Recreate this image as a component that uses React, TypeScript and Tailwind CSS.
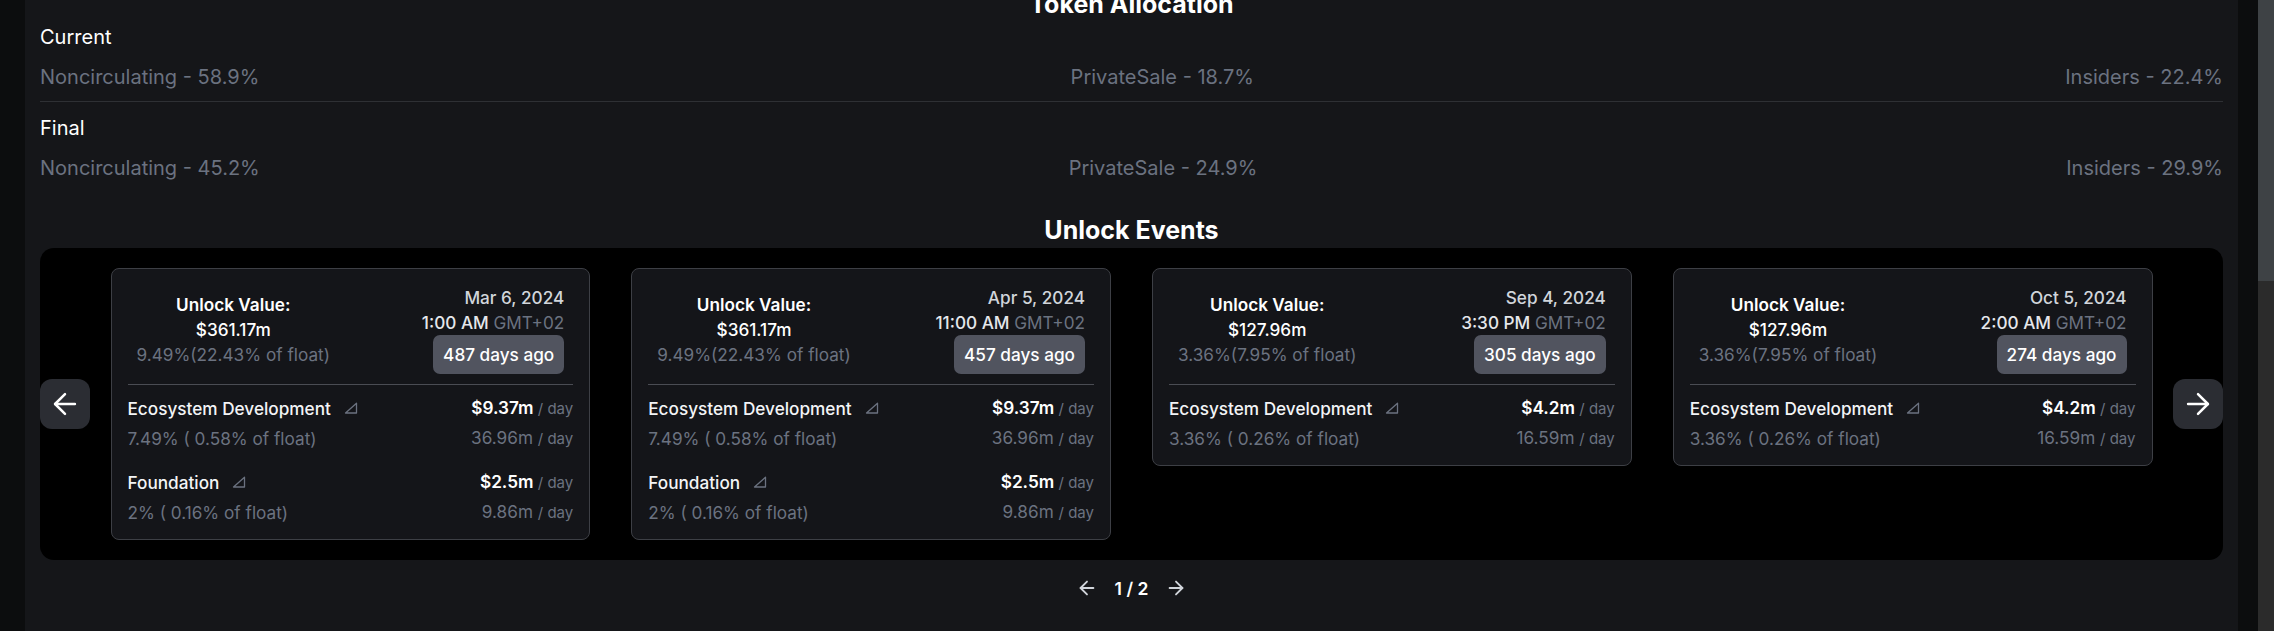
import React from 'react';
import { ArrowLeft, ArrowRight } from 'lucide-react';

type Row = { name: string; pct: string; usd: string; tokens: string };
type Event = {
  value: string;
  pct: string;
  date: string;
  time: string;
  ago: string;
  rows: Row[];
};

const bigRows: Row[] = [
  { name: 'Ecosystem Development', pct: '7.49% ( 0.58% of float)', usd: '$9.37m', tokens: '36.96m' },
  { name: 'Foundation', pct: '2% ( 0.16% of float)', usd: '$2.5m', tokens: '9.86m' },
];

const smallRows: Row[] = [
  { name: 'Ecosystem Development', pct: '3.36% ( 0.26% of float)', usd: '$4.2m', tokens: '16.59m' },
];

const events: Event[] = [
  { value: '$361.17m', pct: '9.49%(22.43% of float)', date: 'Mar 6, 2024', time: '1:00 AM', ago: '487 days ago', rows: bigRows },
  { value: '$361.17m', pct: '9.49%(22.43% of float)', date: 'Apr 5, 2024', time: '11:00 AM', ago: '457 days ago', rows: bigRows },
  { value: '$127.96m', pct: '3.36%(7.95% of float)', date: 'Sep 4, 2024', time: '3:30 PM', ago: '305 days ago', rows: smallRows },
  { value: '$127.96m', pct: '3.36%(7.95% of float)', date: 'Oct 5, 2024', time: '2:00 AM', ago: '274 days ago', rows: smallRows },
];

const allocation = [
  { label: 'Current', items: ['Noncirculating - 58.9%', 'PrivateSale - 18.7%', 'Insiders - 22.4%'] },
  { label: 'Final', items: ['Noncirculating - 45.2%', 'PrivateSale - 24.9%', 'Insiders - 29.9%'] },
];

const Triangle = () => (
  <svg width="14" height="12" viewBox="0 0 14 12" className="ml-[13px] shrink-0">
    <path d="M1.5 11 L12.5 1.2 L12.5 11 Z" fill="none" stroke="#6b7280" strokeWidth="1.3" strokeLinejoin="round" />
  </svg>
);

const EventCard = ({ ev }: { ev: Event }) => (
  <div className="rounded-[8px] border border-[#3d3f45] bg-[#141519] px-[16px] pt-[16px] pb-[14px]">
    <div className="flex items-center justify-between px-[9px] text-[17.2px] leading-[25px]">
      <div className="flex flex-col items-center text-center">
        <span className="font-semibold text-white">Unlock Value:</span>
        <span className="font-medium text-white">{ev.value}</span>
        <span className="text-[#6b7280]">{ev.pct}</span>
      </div>
      <div className="flex flex-col items-end">
        <span className="font-medium text-[#d1d5db]">{ev.date}</span>
        <span className="font-medium text-[#e5e7eb]">
          {ev.time} <span className="font-normal text-[#6b7280]">GMT+02</span>
        </span>
        <span className="flex h-[39px] items-center rounded-[7px] bg-[#51545f] px-[10px] font-medium text-white">
          {ev.ago}
        </span>
      </div>
    </div>
    <div className="mt-[10px] h-px bg-[#4a4c53]" />
    <div className="mt-[10px] flex flex-col gap-[18px] text-[17.2px] leading-[25px]">
      {ev.rows.map((r) => (
        <div key={r.name} className="flex flex-col gap-[4px]">
          <div className="flex items-center justify-between">
            <span className="flex items-center font-medium text-[#f3f4f6]">
              {r.name}
              <Triangle />
            </span>
            <span className="font-semibold text-white">
              {r.usd} <span className="text-[15px] font-normal text-[#6b7280]">/ day</span>
            </span>
          </div>
          <div className="flex items-center justify-between text-[#6b7280]">
            <span>{r.pct}</span>
            <span>
              {r.tokens} <span className="text-[15px]">/ day</span>
            </span>
          </div>
        </div>
      ))}
    </div>
  </div>
);

export default function App() {
  return (
    <div className="flex h-[631px] w-full overflow-hidden bg-[#0c0d0e] font-['Inter',sans-serif]">
      <div className="w-[25px] shrink-0" />
      <main className="min-w-0 flex-1 bg-[#151619] px-[15px]">
        <h2 className="-mt-[13px] text-center text-[25px] leading-[35px] font-bold text-white">Token Allocation</h2>
        {allocation.map((a, i) => (
          <div key={a.label} className={i > 0 ? 'mt-[9px] border-t border-[#2e3034] pt-[11px]' : ''}>
            <div className="text-[20px] leading-[30px] text-white">{a.label}</div>
            <div className="mt-[10px] flex justify-between text-[20px] leading-[30px] text-[#6b7280]">
              {a.items.map((t) => (
                <span key={t}>{t}</span>
              ))}
            </div>
          </div>
        ))}
        <h2 className="mt-[30px] text-center text-[25px] leading-[35px] font-bold text-white">Unlock Events</h2>
        <div className="flex items-center rounded-[14px] bg-black py-[20px]">
          <button className="flex h-[50px] w-[50px] shrink-0 items-center justify-center rounded-[12px] bg-[#2b2d33] text-white">
            <ArrowLeft size={34} strokeWidth={1.75} />
          </button>
          <div className="grid flex-1 grid-cols-4 items-start">
            {events.map((ev) => (
              <div key={ev.date} className="px-[20.5px]">
                <EventCard ev={ev} />
              </div>
            ))}
          </div>
          <button className="flex h-[50px] w-[50px] shrink-0 items-center justify-center rounded-[12px] bg-[#2b2d33] text-white">
            <ArrowRight size={34} strokeWidth={1.75} />
          </button>
        </div>
        <div className="mt-[16.5px] flex items-center justify-center gap-[17px] text-[#d1d5db]">
          <ArrowLeft size={22} strokeWidth={2} />
          <span className="text-[17.5px] leading-[23px] font-semibold text-white">1 / 2</span>
          <ArrowRight size={22} strokeWidth={2} />
        </div>
      </main>
      <div className="w-[20px] shrink-0 bg-[#0c0d0e]" />
      <div className="flex w-[16px] shrink-0 flex-col bg-[#2b2b2b]">
        <div className="h-[281px] bg-[#3e4245]" />
      </div>
    </div>
  );
}
